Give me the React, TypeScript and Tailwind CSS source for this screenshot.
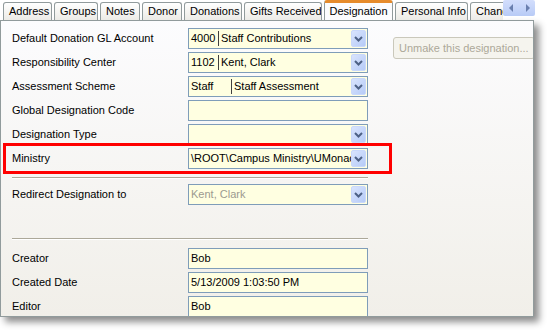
import React from "react"

const tabs = [
  { label: "Address", w: 49 },
  { label: "Groups", w: 44 },
  { label: "Notes", w: 40 },
  { label: "Donor", w: 40 },
  { label: "Donations", w: 58 },
  { label: "Gifts Received", w: 78 },
  { label: "Designation", w: 69, active: true },
  { label: "Personal Info", w: 73 },
  { label: "Change History", w: 90 },
]

function Chevron() {
  return (
    <svg width="9" height="6" viewBox="0 0 9 6">
      <path d="M1 1 L4.5 4.5 L8 1" fill="none" stroke="#4d6185" strokeWidth="2" />
    </svg>
  )
}

function Field({
  value,
  code,
  codeW,
  dropdown,
  disabled,
}: {
  value?: string
  code?: string
  codeW?: number
  dropdown?: boolean
  disabled?: boolean
}) {
  return (
    <div className="flex h-[21px] w-[180px] items-stretch border border-[#7f9db9] bg-[#ffffe1]">
      <div className={`flex flex-1 items-center overflow-hidden whitespace-nowrap pl-[2px] ${disabled ? "text-[#9c9a90]" : "text-black"}`}>
        {code && (
          <span className="shrink-0 border-r border-[#404040] leading-[15px]" style={{ width: codeW }}>
            {code}
          </span>
        )}
        <span className={code ? "pl-[2px]" : ""}>{value}</span>
      </div>
      {dropdown && (
        <div className="my-[1px] mr-[1px] flex w-[15px] items-center justify-center rounded-[2px] border border-[#c9d8fb] bg-gradient-to-br from-[#d9e4fd] to-[#b6cbf7]">
          <Chevron />
        </div>
      )}
    </div>
  )
}

function Row({ label, children, className = "" }: { label: string; children: React.ReactNode; className?: string }) {
  return (
    <div className={`flex items-center ${className}`}>
      <div className="w-[176px] shrink-0 whitespace-nowrap">{label}</div>
      {children}
    </div>
  )
}

function Separator({ className = "" }: { className?: string }) {
  return <div className={`h-[2px] w-[356px] border-t border-[#aca899] bg-white ${className}`} />
}

export default function App() {
  return (
    <div
      className="h-[336px] w-[552px] overflow-hidden bg-white text-[11px] text-black"
      style={{ fontFamily: '"Liberation Sans", Arial, sans-serif' }}
    >
      {/* Tabs */}
      <div className="flex h-[20px] items-end">
        <div className="flex h-[20px] w-[503px] items-end gap-[2px] overflow-hidden pl-[3px]">
          {tabs.map((t) =>
            t.active ? (
              <div
                key={t.label}
                className="relative z-10 mb-[-1px] flex h-[21px] shrink-0 items-center justify-center rounded-t-[3px] border-x border-t-[3px] border-x-[#919b9c] border-t-[#e68b2c] bg-[#fcfcfe] pb-[1px]"
                style={{ width: t.w }}
              >
                {t.label}
              </div>
            ) : (
              <div
                key={t.label}
                className="flex h-[18px] shrink-0 items-center overflow-hidden whitespace-nowrap rounded-t-[3px] border-x border-t border-[#919b9c] bg-gradient-to-b from-white to-[#ecebe6] px-[5px]"
                style={{ width: t.w }}
              >
                {t.label}
              </div>
            )
          )}
        </div>
        <div className="mb-[4px] flex h-[16px] w-[32px] self-start rounded-[2px] bg-gradient-to-b from-[#d3defc] to-[#b8cbf6]">
          <div className="flex flex-1 items-center justify-center">
            <svg width="5" height="8" viewBox="0 0 5 8">
              <path d="M4 0 L0 4 L4 8 Z" fill="#6a7fae" />
            </svg>
          </div>
          <div className="flex flex-1 items-center justify-center">
            <svg width="5" height="8" viewBox="0 0 5 8">
              <path d="M1 0 L5 4 L1 8 Z" fill="#6a7fae" />
            </svg>
          </div>
        </div>
      </div>

      {/* Panel */}
      <div className="h-[297px] w-[534px] overflow-hidden border border-[#919b9c] bg-gradient-to-b from-[#fcfcfe] to-[#f1efe9] shadow-[5px_5px_7px_rgba(0,0,0,0.45)]">
        <div className="flex">
          <div className="flex w-[367px] shrink-0 flex-col pl-[11px] pt-[7px]">
            <div className="flex flex-col gap-[3px]">
              <Row label="Default Donation GL Account">
                <Field code="4000" codeW={28} value="Staff Contributions" dropdown />
              </Row>
              <Row label="Responsibility Center">
                <Field code="1102" codeW={28} value="Kent, Clark" dropdown />
              </Row>
              <Row label="Assessment Scheme">
                <Field code="Staff" codeW={41} value="Staff Assessment" dropdown />
              </Row>
              <Row label="Global Designation Code">
                <Field />
              </Row>
              <Row label="Designation Type">
                <Field dropdown />
              </Row>
              <Row label="Ministry" className="relative">
                <Field value="\ROOT\Campus Ministry\UMonacoMinistry" dropdown />
                <div className="absolute -bottom-[5px] -left-[9px] -right-[24px] -top-[5px] border-[3px] border-[#ff0000]" />
              </Row>
            </div>
            <Separator className="mt-[8px]" />
            <Row label="Redirect Designation to" className="mt-[5px]">
              <Field value="Kent, Clark" dropdown disabled />
            </Row>
            <Separator className="mt-[33px]" />
            <div className="mt-[8px] flex flex-col gap-[3px]">
              <Row label="Creator">
                <Field value="Bob" />
              </Row>
              <Row label="Created Date">
                <Field value="5/13/2009 1:03:50 PM" />
              </Row>
              <Row label="Editor">
                <Field value="Bob" />
              </Row>
            </div>
          </div>
          <div className="ml-[25px] mt-[16px]">
            <div className="flex h-[22px] w-[142px] items-center whitespace-nowrap rounded-[3px] border border-[#cac8bb] bg-[#f5f4ee] pl-[5px] text-[#aca899]">
              Unmake this designation...
            </div>
          </div>
        </div>
      </div>
    </div>
  )
}
